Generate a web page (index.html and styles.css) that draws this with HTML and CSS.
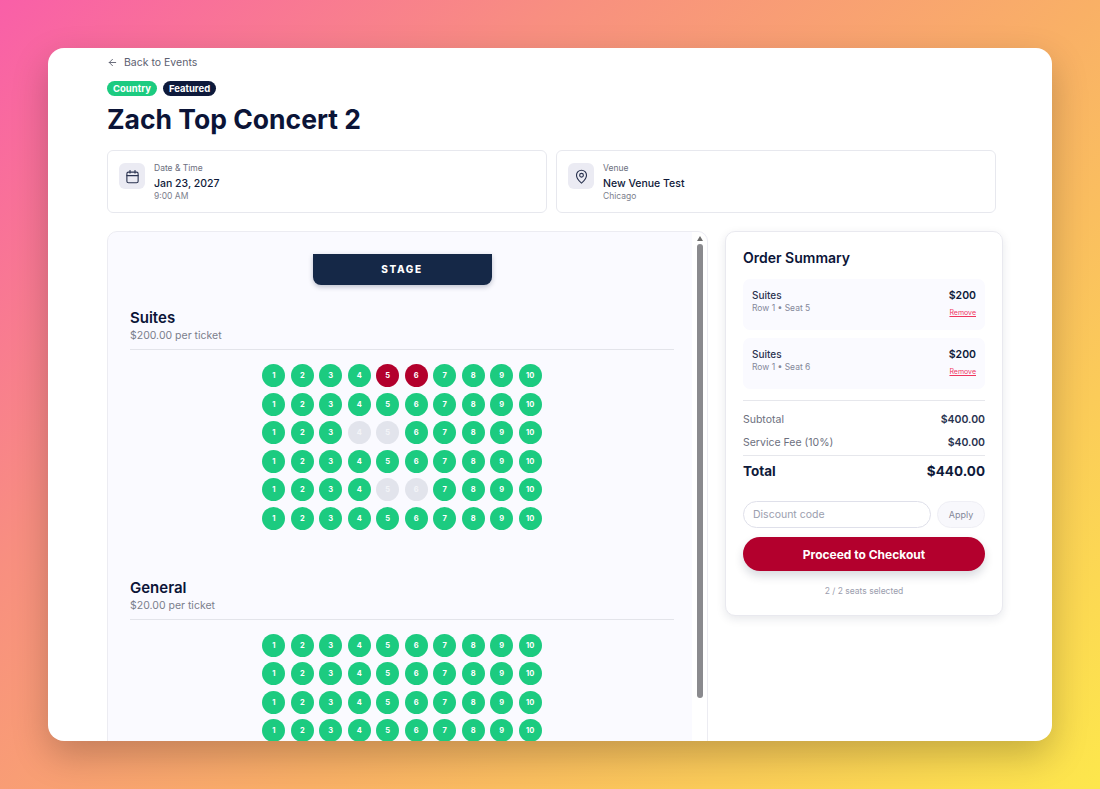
FILE: index.html
```html
<!DOCTYPE html>
<html lang="en">

<head>
    <meta charset="UTF-8">
    <meta name="viewport" content="width=device-width, initial-scale=1.0">
    <title>Zach Top Concert 2 - Select Seats</title>
    <link rel="stylesheet" href="styles.css">
</head>

<body>
    <main class="window">
        <a class="back-link" href="#">
            <svg class="back-icon" viewBox="0 0 24 24" fill="none" stroke="currentColor" stroke-width="2" stroke-linecap="round" stroke-linejoin="round">
                <path d="M19 12H5"></path>
                <path d="M12 19l-7-7 7-7"></path>
            </svg>
            Back to Events
        </a>

        <div class="tags">
            <span class="tag tag-green">Country</span>
            <span class="tag tag-dark">Featured</span>
        </div>

        <h1 class="title">Zach Top Concert 2</h1>

        <div class="info-row">
            <div class="info-card">
                <div class="info-icon">
                    <svg viewBox="0 0 24 24" fill="none" stroke="currentColor" stroke-width="1.8" stroke-linecap="round" stroke-linejoin="round">
                        <rect x="3" y="5" width="18" height="17" rx="2.5"></rect>
                        <path d="M8 2.5v4"></path>
                        <path d="M16 2.5v4"></path>
                        <path d="M3 10.5h18"></path>
                    </svg>
                </div>
                <div>
                    <div class="info-label">Date &amp; Time</div>
                    <div class="info-main">Jan 23, 2027</div>
                    <div class="info-sub">9:00 AM</div>
                </div>
            </div>
            <div class="info-card">
                <div class="info-icon">
                    <svg viewBox="0 0 24 24" fill="none" stroke="currentColor" stroke-width="1.8" stroke-linecap="round" stroke-linejoin="round">
                        <path d="M20 10c0 6-8 12.5-8 12.5S4 16 4 10a8 8 0 0 1 16 0z"></path>
                        <circle cx="12" cy="10" r="3"></circle>
                    </svg>
                </div>
                <div>
                    <div class="info-label">Venue</div>
                    <div class="info-main">New Venue Test</div>
                    <div class="info-sub">Chicago</div>
                </div>
            </div>
        </div>

        <div class="columns">
            <section class="seat-panel">
                <div class="scrollbar">
                    <span class="scroll-arrow"></span>
                    <span class="scroll-thumb"></span>
                </div>
                <div class="stage">STAGE</div>

                <div class="section-head">
                    <h2>Suites</h2>
                    <p>$200.00 per ticket</p>
                </div>
                <div class="seat-grid" id="suites"></div>

                <div class="section-head section-general">
                    <h2>General</h2>
                    <p>$20.00 per ticket</p>
                </div>
                <div class="seat-grid" id="general"></div>
            </section>

            <aside class="summary">
                <h2>Order Summary</h2>

                <div class="order-item">
                    <div>
                        <div class="item-name">Suites</div>
                        <div class="item-seat">Row 1 • Seat 5</div>
                    </div>
                    <div class="item-right">
                        <div class="item-price">$200</div>
                        <a class="remove" href="#">Remove</a>
                    </div>
                </div>
                <div class="order-item">
                    <div>
                        <div class="item-name">Suites</div>
                        <div class="item-seat">Row 1 • Seat 6</div>
                    </div>
                    <div class="item-right">
                        <div class="item-price">$200</div>
                        <a class="remove" href="#">Remove</a>
                    </div>
                </div>

                <div class="totals">
                    <div class="line"><span>Subtotal</span><b>$400.00</b></div>
                    <div class="line"><span>Service Fee (10%)</span><b>$40.00</b></div>
                </div>
                <div class="total"><span>Total</span><span>$440.00</span></div>

                <div class="discount">
                    <input type="text" placeholder="Discount code">
                    <button class="apply">Apply</button>
                </div>
                <button class="checkout">Proceed to Checkout</button>
                <p class="seat-count">2 / 2 seats selected</p>
            </aside>
        </div>
    </main>

    <script>
        // rows of 10 seats, "row-seat" keys mark the special ones
        function buildSeats(id, rows, selected, taken) {
            const grid = document.getElementById(id);
            for (let r = 1; r <= rows; r++) {
                for (let s = 1; s <= 10; s++) {
                    const seat = document.createElement('span');
                    const key = `${r}-${s}`;
                    seat.className = 'seat';
                    if (selected.includes(key)) seat.classList.add('selected');
                    if (taken.includes(key)) seat.classList.add('taken');
                    seat.textContent = s;
                    grid.appendChild(seat);
                }
            }
        }

        buildSeats('suites', 6, ['1-5', '1-6'], ['3-4', '3-5', '5-5', '5-6']);
        buildSeats('general', 4, [], []);
    </script>
</body>

</html>
```

FILE: styles.css
```css
* {
    box-sizing: border-box;
}

body {
    margin: 0;
    height: 789px;
    padding: 48px;
    overflow: hidden;
    font-family: Inter, "Liberation Sans", sans-serif;
    color: #0f1a3a;
    background: linear-gradient(135deg, #f95fa8 0%, #f88f80 30%, #f9b066 58%, #fde74c 100%);
}

.window {
    height: 693px;
    padding: 6px 56px 0 59px;
    overflow: hidden;
    background: #fff;
    border-radius: 16px;
    box-shadow: 0 14px 36px rgba(0, 0, 0, 0.22);
}

.back-link {
    display: flex;
    align-items: center;
    gap: 6px;
    height: 16px;
    font-size: 10.5px;
    color: #5d6070;
    text-decoration: none;
}

.back-icon {
    width: 11px;
    height: 11px;
}

.tags {
    display: flex;
    gap: 6px;
    margin-top: 11px;
}

.tag {
    height: 15px;
    padding: 0 6px;
    border-radius: 8px;
    font-size: 9.5px;
    font-weight: 700;
    line-height: 15px;
    color: #fff;
}

.tag-green {
    background: #1ccb80;
}

.tag-dark {
    background: #0e1a3b;
}

.title {
    margin: 7px 0 0;
    font-size: 26.5px;
    font-weight: 700;
    line-height: 32px;
    color: #0b1437;
}

.info-row {
    display: flex;
    gap: 9px;
    margin-top: 15px;
}

.info-card {
    flex: 1;
    display: flex;
    gap: 9px;
    height: 63px;
    padding: 12px 11px;
    border: 1px solid #e7e8ee;
    border-radius: 6px;
}

.info-icon {
    display: flex;
    align-items: center;
    justify-content: center;
    width: 26px;
    height: 26px;
    border-radius: 6px;
    background: #ebebf3;
    color: #2a3350;
}

.info-icon svg {
    width: 15px;
    height: 15px;
}

.info-label {
    font-size: 8.5px;
    line-height: 11px;
    color: #6c6f7e;
}

.info-main {
    margin-top: 2px;
    font-size: 10.5px;
    font-weight: 500;
    line-height: 15px;
    color: #0f1a3a;
}

.info-sub {
    font-size: 8.5px;
    line-height: 11px;
    color: #7b7e8c;
}

.columns {
    display: flex;
    align-items: flex-start;
    gap: 17px;
    margin-top: 18px;
}

.seat-panel {
    position: relative;
    width: 601px;
    height: 640px;
    flex-shrink: 0;
    padding: 23px 33px 0 22px;
    background: #fafaff;
    border: 1px solid #ececf2;
    border-radius: 10px;
}

.scrollbar {
    position: absolute;
    top: 0;
    right: 0;
    bottom: 0;
    display: flex;
    flex-direction: column;
    align-items: center;
    width: 15px;
    padding-top: 4px;
    background: #fff;
    border-top-right-radius: 10px;
}

.scroll-arrow {
    width: 0;
    height: 0;
    border-left: 3.5px solid transparent;
    border-right: 3.5px solid transparent;
    border-bottom: 5px solid #6f6f6f;
}

.scroll-thumb {
    width: 6px;
    height: 454px;
    margin-top: 3px;
    border-radius: 3px;
    background: #8a8a8e;
}

.stage {
    width: 179px;
    height: 31px;
    margin: -1px auto 0;
    border-radius: 0 0 8px 8px;
    background: #152847;
    box-shadow: 0 2px 5px rgba(15, 26, 58, 0.25);
    color: #fff;
    font-size: 10px;
    font-weight: 800;
    letter-spacing: 1.6px;
    line-height: 31px;
    text-align: center;
}

.section-head {
    margin-top: 23px;
    padding-bottom: 6px;
    border-bottom: 1px solid #e3e4ea;
}

.section-head h2 {
    margin: 0;
    font-size: 15px;
    font-weight: 600;
    line-height: 20px;
    color: #0b1437;
}

.section-head p {
    margin: 1px 0 0;
    font-size: 10.5px;
    line-height: 14px;
    color: #7b7e8c;
}

.section-general {
    margin-top: 48px;
}

.seat-grid {
    display: grid;
    grid-template-columns: repeat(10, 23px);
    gap: 5.5px;
    justify-content: center;
    margin-top: 14px;
}

.seat {
    display: flex;
    align-items: center;
    justify-content: center;
    width: 23px;
    height: 23px;
    border-radius: 50%;
    background: #1ccb80;
    color: #fff;
    font-size: 7.5px;
    font-weight: 700;
}

.seat.selected {
    background: #b3002d;
}

.seat.taken {
    background: #e2e4ec;
    color: #f3f4f8;
}

.summary {
    flex: 1;
    height: 385px;
    padding: 17px;
    background: #fff;
    border: 1px solid #e9e9ef;
    border-radius: 10px;
    box-shadow: 0 3px 10px rgba(15, 26, 58, 0.1);
}

.summary h2 {
    margin: 0 0 12px;
    font-size: 14px;
    font-weight: 600;
    line-height: 18px;
    color: #0b1437;
}

.order-item {
    display: flex;
    justify-content: space-between;
    height: 51px;
    margin-bottom: 8px;
    padding: 10px 9px;
    background: #fafaff;
    border-radius: 7px;
}

.item-name {
    font-size: 10px;
    font-weight: 500;
    line-height: 13px;
    color: #2a3350;
}

.item-seat {
    margin-top: 0;
    font-size: 8.5px;
    line-height: 12px;
    color: #85889a;
}

.item-right {
    text-align: right;
}

.item-price {
    font-size: 10.5px;
    font-weight: 600;
    line-height: 13px;
    color: #0f1a3a;
}

.remove {
    display: block;
    margin-top: 6px;
    font-size: 7px;
    line-height: 10px;
    color: #f0355f;
}

.totals {
    margin-top: 11px;
    padding-top: 8px;
    border-top: 1px solid #e6e7ec;
    border-bottom: 1px solid #e6e7ec;
}

.line {
    display: flex;
    justify-content: space-between;
    height: 23px;
    font-size: 10.5px;
    line-height: 21px;
    color: #6c6f7e;
}

.line b {
    font-weight: 600;
    color: #2a3350;
}

.total {
    display: flex;
    justify-content: space-between;
    margin-top: 5px;
    font-size: 13.5px;
    font-weight: 700;
    line-height: 20px;
    color: #0f1a3a;
}

.discount {
    display: flex;
    gap: 6px;
    margin-top: 20px;
}

.discount input {
    flex: 1;
    min-width: 0;
    height: 27px;
    padding: 0 9px;
    border: 1px solid #dfe0ea;
    border-radius: 14px;
    outline: none;
    font-family: inherit;
    font-size: 10.5px;
}

.discount input::placeholder {
    color: #9b9eae;
}

.apply {
    width: 48px;
    height: 27px;
    padding: 0;
    background: #f8f8fc;
    border: 1px solid #efeff5;
    border-radius: 14px;
    font-family: inherit;
    font-size: 9px;
    color: #85889a;
}

.checkout {
    display: block;
    width: 100%;
    height: 34px;
    margin-top: 9px;
    background: #b3002d;
    border: 0;
    border-radius: 17px;
    box-shadow: 0 5px 10px rgba(15, 26, 58, 0.16);
    font-family: inherit;
    font-size: 12px;
    font-weight: 700;
    color: #fff;
}

.seat-count {
    margin: 14px 0 0;
    font-size: 8.5px;
    line-height: 12px;
    text-align: center;
    color: #9b9eae;
}
```
